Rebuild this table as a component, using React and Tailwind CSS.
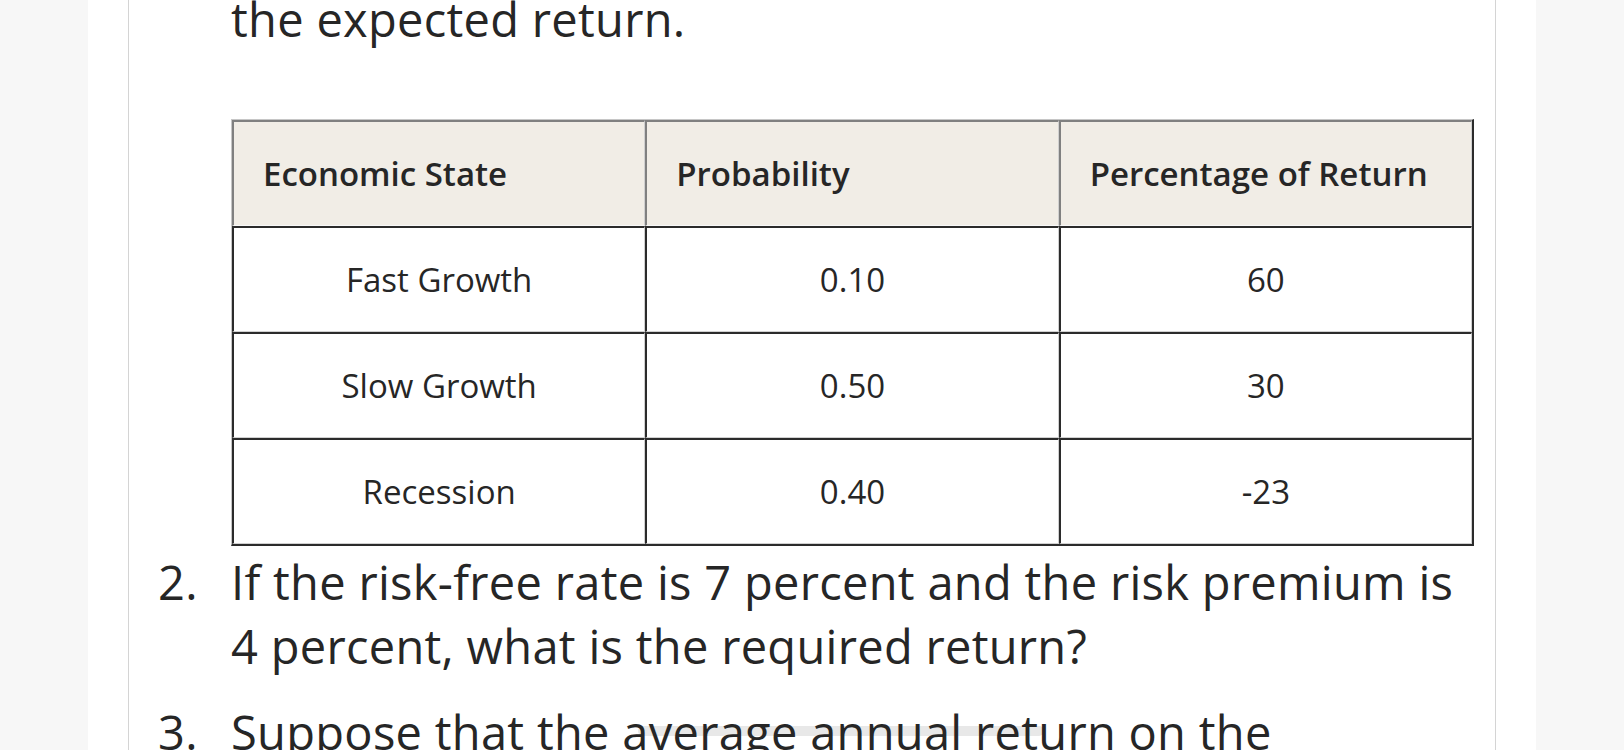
import React from 'react';

const rows = [
  ['Fast Growth', '0.10', '60'],
  ['Slow Growth', '0.50', '30'],
  ['Recession', '0.40', '-23'],
];

const font = { fontFamily: '"Open Sans", "Noto Sans", sans-serif' };

export default function App() {
  return (
    <div className="h-[750px] overflow-hidden bg-[#f7f7f7] px-[88px]" style={font}>
      <div className="h-full bg-white px-[40px]">
        <div className="flex h-full flex-col border-x border-[#d4d4d4] pl-[29px] pr-[21px] text-[#262626]">
          <div className="-mt-[13px] pl-[73px] text-[47px] leading-[64px] tracking-[0.3px]">
            the expected return.
          </div>

          <div className="pl-[73px] pt-[68px]">
            <table className="w-full border-separate border-spacing-0 border-t border-l border-r-2 border-b-2 border-t-[#c6c6c6] border-l-[#c6c6c6] border-r-[#2b2b2b] border-b-[#2b2b2b]">
              <thead>
                <tr className="bg-[#f1ede6]">
                  {['Economic State', 'Probability', 'Percentage of Return'].map((h) => (
                    <th
                      key={h}
                      className="h-[106px] w-1/3 border-t-2 border-l-2 border-r border-b border-t-[#808080] border-l-[#808080] border-r-[#d0d0d0] border-b-[#f8f8f8] px-[29px] text-left text-[33px] font-semibold"
                    >
                      {h}
                    </th>
                  ))}
                </tr>
              </thead>
              <tbody>
                {rows.map((r) => (
                  <tr key={r[0]}>
                    {r.map((c, i) => (
                      <td
                        key={i}
                        className="h-[106px] border-t-2 border-l-2 border-r border-b border-t-[#2b2b2b] border-l-[#2b2b2b] border-r-[#d0d0d0] border-b-[#d0d0d0] text-center text-[33px]"
                      >
                        {c}
                      </td>
                    ))}
                  </tr>
                ))}
              </tbody>
            </table>
          </div>

          <ol className="text-[47px] leading-[64px] tracking-[0.3px]">
            <li className="flex pt-[4px]">
              <span className="w-[73px] shrink-0">2.</span>
              <span>If the risk-free rate is 7 percent and the risk premium is 4 percent, what is the required return?</span>
            </li>
            <li className="relative flex pt-[22px]">
              <span className="absolute left-[480px] top-[48px] h-[10px] w-[406px] rounded-full bg-[#e8e8e8]"></span>
              <span className="relative w-[73px] shrink-0">3.</span>
              <span className="relative">Suppose that the average annual return on the</span>
            </li>
          </ol>
        </div>
      </div>
    </div>
  );
}
